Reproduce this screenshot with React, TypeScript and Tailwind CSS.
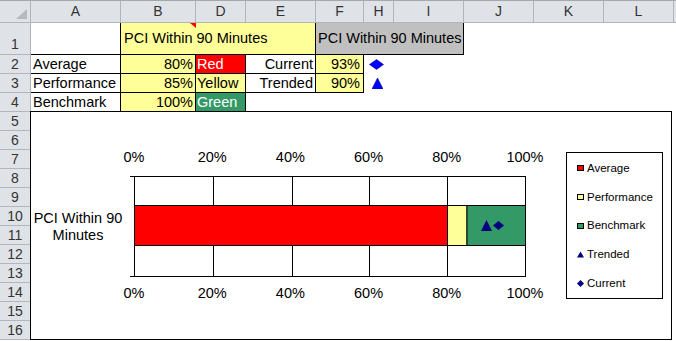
import React from 'react';

const HEAD = 'bg-[#dfe3e8] border-[#b1b6bc]';
const LETTERS = ['A', 'B', 'D', 'E', 'F', 'H', 'I', 'J', 'K', 'L'];

function RowHead({ n, bottom }: { n: number; bottom?: boolean }) {
  return (
    <div
      className={`${HEAD} h-full border-r border-b flex justify-center text-[#333] text-[14px] leading-[17px] ${
        bottom ? 'items-end pb-[1px]' : 'items-center'
      }`}
    >
      {n}
    </div>
  );
}

function Empty({ n }: { n: number }) {
  return (
    <>
      {Array.from({ length: n }).map((_, i) => (
        <div key={i} />
      ))}
    </>
  );
}

function Marker({ kind }: { kind: string }) {
  if (kind === 'tri')
    return (
      <svg width="7" height="7" viewBox="0 0 7 7">
        <polygon points="3.5,0.5 7,6.5 0,6.5" fill="#000080" />
      </svg>
    );
  if (kind === 'dia')
    return (
      <svg width="7" height="7" viewBox="0 0 7 7">
        <polygon points="3.5,0 7,3.5 3.5,7 0,3.5" fill="#000080" />
      </svg>
    );
  return <div className={`w-[7px] h-[6px] border border-black ${kind}`} />;
}

export default function App() {
  const legend = [
    { k: 'bg-[#ff0000]', t: 'Average' },
    { k: 'bg-[#ffff99]', t: 'Performance' },
    { k: 'bg-[#339966]', t: 'Benchmark' },
    { k: 'tri', t: 'Trended' },
    { k: 'dia', t: 'Current' },
  ];
  const ticks = ['0%', '20%', '40%', '60%', '80%', '100%'];
  const gx = [4, 83, 162, 239, 317, 395];

  return (
    <div className="w-[676px] h-[341px] overflow-hidden bg-white text-black font-['Liberation_Sans',Arial,sans-serif] text-[14.5px] leading-[17px]">
      <div className="grid grid-cols-[31px_90px_75px_50px_70px_48px_30px_70px_70px_70px_70px_2px] grid-rows-[23px_32px_19px_19px_19px_repeat(12,19px)_1px]">
        {/* header row */}
        <div className={`${HEAD} border-r border-b border-t border-t-[#a3a8ad] flex items-end justify-end pr-[3px] pb-[3px]`}>
          <svg width="11" height="10" viewBox="0 0 11 10">
            <polygon points="11,0 11,10 0,10" fill="#b6babf" />
          </svg>
        </div>
        {LETTERS.map((l) => (
          <div
            key={l}
            className={`${HEAD} border-r border-b border-t border-t-[#a3a8ad] flex items-center justify-center text-[#333] text-[14px]`}
          >
            {l}
          </div>
        ))}
        <div className={`${HEAD} border-b border-t border-t-[#a3a8ad]`} />

        {/* row 1 */}
        <RowHead n={1} bottom />
        <div className="border-r border-b border-black" />
        <div className="col-span-3 bg-[#ffff99] border-r border-b border-black flex items-center pl-[3px] relative">
          PCI Within 90 Minutes
          <svg className="absolute left-[69px] top-0" width="6" height="5" viewBox="0 0 6 5">
            <polygon points="0,0 6,0 6,5" fill="#ff0000" />
          </svg>
        </div>
        <div className="col-span-3 bg-[#c0c0c0] border-r border-b border-black flex items-center pl-[2px]">
          PCI Within 90 Minutes
        </div>
        <Empty n={4} />

        {/* row 2 */}
        <RowHead n={2} />
        <div className="border-r border-b border-black flex items-center pl-[2px]">Average</div>
        <div className="bg-[#ffff99] border-r border-b border-black flex items-center justify-end pr-[2px]">80%</div>
        <div className="bg-[#ff0000] text-white border-r border-b border-black flex items-center pl-[1px]">Red</div>
        <div className="border-r border-b border-black flex items-center justify-end pr-[2px]">Current</div>
        <div className="bg-[#ffff99] border-r border-b border-black flex items-center justify-end pr-[3px]">93%</div>
        <div className="flex items-center pl-[5px]">
          <svg width="15" height="11" viewBox="0 0 15 11">
            <polygon points="7.5,0.5 14.5,5.5 7.5,10.5 0.5,5.5" fill="#0000ff" stroke="#00008b" strokeWidth="0.6" />
          </svg>
        </div>
        <Empty n={5} />

        {/* row 3 */}
        <RowHead n={3} />
        <div className="border-r border-b border-black flex items-center pl-[2px]">Performance</div>
        <div className="bg-[#ffff99] border-r border-b border-black flex items-center justify-end pr-[2px]">85%</div>
        <div className="bg-[#ffff99] border-r border-b border-black flex items-center pl-[1px]">Yellow</div>
        <div className="border-r border-b border-black flex items-center justify-end pr-[2px]">Trended</div>
        <div className="bg-[#ffff99] border-r border-b border-black flex items-center justify-end pr-[3px]">90%</div>
        <div className="flex items-center pl-[8px]">
          <svg width="11" height="11" viewBox="0 0 11 11">
            <polygon points="5.5,0 11,11 0,11" fill="#0000ff" stroke="#00008b" strokeWidth="0.6" />
          </svg>
        </div>
        <Empty n={5} />

        {/* row 4 */}
        <RowHead n={4} />
        <div className="border-r border-b border-black flex items-center pl-[2px]">Benchmark</div>
        <div className="bg-[#ffff99] border-r border-b border-black flex items-center justify-end pr-[2px]">100%</div>
        <div className="bg-[#339966] text-white border-r border-b border-black flex items-center pl-[1px]">Green</div>
        <Empty n={8} />

        {/* row headers 5..16 */}
        {Array.from({ length: 12 }).map((_, i) => (
          <div key={i} className="col-start-1" style={{ gridRowStart: i + 6 }}>
            <RowHead n={i + 5} />
          </div>
        ))}

        {/* chart */}
        <div className="col-start-2 col-span-10 row-start-6 row-span-12 -mt-[1px] -ml-[1px] w-[642px] h-[229px] relative z-10 bg-white border border-black flex">
          <div className="w-[99px] flex flex-col">
            <div className="h-[64px]" />
            <div className="h-[101px] flex items-center justify-center pr-[5px] text-center leading-[17px]">
              PCI Within 90
              <br />
              Minutes
            </div>
          </div>
          <div className="w-[396px] flex flex-col">
            <div className="mt-[36px] h-[18px] -ml-[16px] w-[431px] flex justify-between">
              {ticks.map((t) => (
                <div key={t} className="w-[40px] text-center leading-[18px]">
                  {t}
                </div>
              ))}
            </div>
            <svg className="mt-[10px]" width="396" height="101" viewBox="0 0 396 101">
              <line x1="0" y1="0.5" x2="396" y2="0.5" stroke="#000" />
              <line x1="0" y1="100.5" x2="396" y2="100.5" stroke="#000" />
              {gx.map((x) => (
                <line key={x} x1={x + 0.5} y1="0" x2={x + 0.5} y2="101" stroke="#000" />
              ))}
              <rect x="4.5" y="29.5" width="313" height="40" fill="#ff0000" stroke="#000" />
              <rect x="317.5" y="29.5" width="19.5" height="40" fill="#ffff99" stroke="#000" />
              <rect x="337" y="29.5" width="58.5" height="40" fill="#339966" stroke="#000" />
              <polygon points="356.5,44 362,55 351,55" fill="#000080" />
              <polygon points="368.5,45 374,49.5 368.5,54 363,49.5" fill="#000080" />
            </svg>
            <div className="mt-[7px] h-[18px] -ml-[16px] w-[431px] flex justify-between">
              {ticks.map((t) => (
                <div key={t} className="w-[40px] text-center leading-[18px]">
                  {t}
                </div>
              ))}
            </div>
          </div>
          <div className="ml-[40px] mt-[40px] w-[97px] h-[147px] border border-black flex flex-col pt-[1px]">
            {legend.map((l) => (
              <div key={l.t} className="h-[29px] flex items-center pl-[10px] gap-[3px] text-[11.5px]">
                <div className="w-[7px] flex items-center justify-center">
                  <Marker kind={l.k} />
                </div>
                <span>{l.t}</span>
              </div>
            ))}
          </div>
        </div>
      </div>
    </div>
  );
}
